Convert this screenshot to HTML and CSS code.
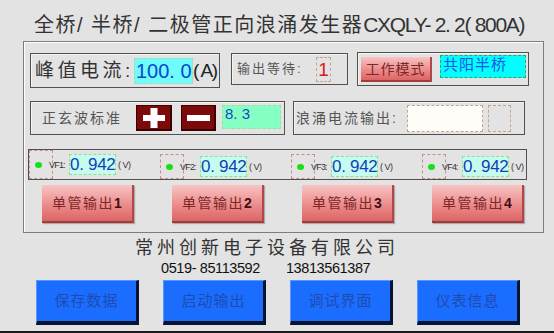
FILE: index.html
```html
<!DOCTYPE html>
<html lang="zh-CN">
<head>
    <meta charset="UTF-8">
    <meta name="viewport" content="width=device-width, initial-scale=1.0">
    <title>浪涌发生器</title>
    <link rel="stylesheet" href="styles.css">
</head>
<body>
    <div class="screen">
        <div class="title">全桥/ 半桥/ 二极管正向浪涌发生器<span class="model">CXQLY- 2. 2( 800A)</span></div>

        <div class="panel">
            <div class="row row-top">
                <div class="box box-peak">
                    <span class="peak-label">峰值电流:</span>
                    <span class="field peak-value">100. 0</span>
                    <span class="peak-unit">( A)</span>
                </div>
                <div class="box box-wait">
                    <span class="small-label">输出等待:</span>
                    <span class="field wait-value">1</span>
                </div>
                <div class="box box-mode">
                    <span class="btn-pink btn-mode">工作模式</span>
                    <span class="field mode-value">共阳半桥</span>
                </div>
            </div>

            <div class="row row-mid">
                <div class="box box-sine">
                    <span class="small-label sine-label">正玄波标准</span>
                    <span class="btn-red">
                        <svg width="24" height="20" viewBox="0 0 24 20"><rect x="1" y="7" width="22" height="6" fill="#fff"/><rect x="8.5" y="0" width="7" height="20" fill="#fff"/></svg>
                    </span>
                    <span class="btn-red btn-minus">
                        <svg width="24" height="20" viewBox="0 0 24 20"><rect x="1" y="7" width="23" height="6" fill="#fff"/></svg>
                    </span>
                    <span class="field sine-value">8. 3</span>
                </div>
                <div class="box box-surge">
                    <span class="small-label">浪涌电流输出:</span>
                    <span class="field surge-value"></span>
                    <span class="field surge-extra"></span>
                </div>
            </div>

            <div class="row">
                <div class="box box-vf">
                    <div class="vf">
                        <span class="vf-led"><i></i></span>
                        <span class="vf-label">VF1:</span>
                        <span class="field vf-value">0. 942</span>
                        <span class="vf-unit">( V)</span>
                    </div>
                    <div class="vf">
                        <span class="vf-led"><i></i></span>
                        <span class="vf-label">VF2:</span>
                        <span class="field vf-value">0. 942</span>
                        <span class="vf-unit">( V)</span>
                    </div>
                    <div class="vf">
                        <span class="vf-led"><i></i></span>
                        <span class="vf-label">VF3:</span>
                        <span class="field vf-value">0. 942</span>
                        <span class="vf-unit">( V)</span>
                    </div>
                    <div class="vf">
                        <span class="vf-led"><i></i></span>
                        <span class="vf-label">VF4:</span>
                        <span class="field vf-value">0. 942</span>
                        <span class="vf-unit">( V)</span>
                    </div>
                </div>
            </div>

            <div class="row row-out">
                <span class="btn-pink btn-out">单管输出<b>1</b></span>
                <span class="btn-pink btn-out">单管输出<b>2</b></span>
                <span class="btn-pink btn-out">单管输出<b>3</b></span>
                <span class="btn-pink btn-out">单管输出<b>4</b></span>
            </div>
        </div>

        <div class="company">常州创新电子设备有限公司</div>
        <div class="phone"><span>0519- 85113592</span><span>13813561387</span></div>

        <div class="menu">
            <span class="btn-blue">保存数据</span>
            <span class="btn-blue">启动输出</span>
            <span class="btn-blue">调试界面</span>
            <span class="btn-blue">仪表信息</span>
        </div>
        <div class="bottom-line"></div>
    </div>
</body>
</html>
```

FILE: styles.css
```css
body {
    margin: 0;
    background-color: #e3e3e3;
    font-family: "Liberation Sans", "Noto Sans CJK SC", sans-serif;
    color: #2b2b2b;
}
.screen {
    width: 554px;
    height: 333px;
    overflow: hidden;
    display: flex;
    flex-direction: column;
}
.title {
    height: 41px;
    box-sizing: border-box;
    padding: 12px 0 0 34px;
    font-size: 20px;
    line-height: 26px;
    letter-spacing: 1.5px;
    color: #333;
    white-space: nowrap;
}
.model {
    font-size: 21px;
    letter-spacing: -1.3px;
}
.panel {
    margin-left: 23px;
    width: 521px;
    height: 192px;
    box-sizing: border-box;
    border: 1px solid #7c7c7c;
    box-shadow: inset 1px 1px 0 #fff;
    padding-top: 11px;
    display: flex;
    flex-direction: column;
}
.row {
    display: flex;
    align-items: flex-start;
}
.row-mid {
    margin-top: 13px;
}
.row-mid + .row {
    margin-top: 14px;
}
.row-out {
    margin-top: 5px;
    padding-left: 18px;
    gap: 38px;
}
.box {
    box-sizing: border-box;
    border: 1px solid #505050;
    box-shadow: inset 1px 1px 0 #f4f4f4;
    display: flex;
    align-items: center;
}
.field {
    box-sizing: border-box;
    display: block;
    border: 1px dashed #c4a48c;
}
.box-peak {
    margin-left: 6px;
    width: 190px;
    height: 35px;
    padding-left: 4px;
}
.peak-label {
    width: 99px;
    font-size: 19px;
    line-height: 24px;
    letter-spacing: 3.5px;
    color: #333;
}
.peak-value {
    width: 59px;
    height: 26px;
    background-color: #6ffcff;
    border-color: #b8d890;
    color: #1045c8;
    font-size: 20px;
    line-height: 24px;
    padding-left: 1px;
    white-space: nowrap;
}
.peak-unit {
    font-size: 19px;
    line-height: 24px;
    letter-spacing: -1.5px;
    color: #222;
}
.box-wait {
    margin-left: 11px;
    width: 117px;
    height: 32px;
    padding-left: 5px;
}
.small-label {
    font-size: 14px;
    line-height: 20px;
    letter-spacing: 2px;
    color: #555;
}
.box-wait .small-label {
    font-size: 13px;
    width: 79px;
}
.wait-value {
    width: 15px;
    height: 25px;
    color: #e01818;
    font-size: 19px;
    line-height: 23px;
    text-align: center;
}
.box-mode {
    margin-left: 9px;
    margin-top: -1px;
    width: 172px;
    height: 34px;
    padding-left: 3px;
    align-items: flex-start;
}
.btn-pink {
    box-sizing: border-box;
    display: flex;
    align-items: center;
    justify-content: center;
    background: linear-gradient(#f8c4c4, #ec8c8c 55%, #dc6464);
    border-right: 2px solid #b04848;
    border-bottom: 2px solid #a03c3c;
    color: #7a2828;
}
.btn-mode {
    margin-top: 4px;
    width: 71px;
    height: 25px;
    font-size: 14px;
    letter-spacing: 1px;
    line-height: 20px;
}
.mode-value {
    margin: 2px 0 0 8px;
    width: 86px;
    height: 23px;
    background-color: #00ffff;
    border-color: #40a060;
    color: #2050e8;
    font-size: 15px;
    line-height: 18px;
    letter-spacing: 1px;
    padding-left: 2px;
}
.box-sine {
    margin-left: 6px;
    width: 255px;
    height: 34px;
    padding-left: 11px;
}
.sine-label {
    width: 94px;
}
.btn-red {
    box-sizing: border-box;
    width: 36px;
    height: 26px;
    display: flex;
    align-items: center;
    justify-content: center;
    background-color: #7c0a0a;
    border: 1px solid #3a0000;
    border-right-width: 2px;
    border-bottom-width: 2px;
}
.btn-minus {
    margin-left: 9px;
    width: 35px;
}
.sine-value {
    margin: -3px 0 0 6px;
    width: 59px;
    height: 24px;
    background-color: #86ffc4;
    border-color: #b0d8a0;
    color: #1848c0;
    font-size: 15px;
    line-height: 15px;
    padding-left: 2px;
}
.box-surge {
    margin-left: 8px;
    width: 232px;
    height: 34px;
    padding-left: 2px;
}
.box-surge .small-label {
    width: 111px;
}
.surge-value {
    width: 76px;
    height: 27px;
    background-color: #fffdf8;
}
.surge-extra {
    margin-left: 5px;
    width: 23px;
    height: 27px;
}
.box-vf {
    margin-left: 4px;
    width: 499px;
    height: 31px;
    box-shadow: none;
    align-items: stretch;
}
.vf {
    width: 131px;
    display: flex;
    align-items: center;
    flex-shrink: 0;
}
.vf + .vf {
    padding-top: 4px;
    box-sizing: border-box;
}
.vf-led {
    box-sizing: border-box;
    width: 24px;
    align-self: stretch;
    border: 1px dashed #c89080;
    display: flex;
    align-items: center;
    padding-left: 5px;
}
.vf-led i {
    display: block;
    width: 7px;
    height: 6px;
    border-radius: 50%;
    background-color: #14e014;
}
.vf-label {
    margin-left: -4px;
    width: 20px;
    font-size: 9px;
    letter-spacing: -0.8px;
    color: #333;
}
.vf-value {
    width: 47px;
    height: 21px;
    background-color: #c6fcf0;
    border-color: #90e090;
    color: #1040b8;
    font-size: 17px;
    line-height: 19px;
    letter-spacing: -0.3px;
    white-space: nowrap;
}
.vf-unit {
    margin-left: 2px;
    font-size: 9px;
    letter-spacing: -0.5px;
    color: #333;
}
.btn-out {
    width: 92px;
    height: 38px;
    font-size: 14px;
    letter-spacing: 1.5px;
    line-height: 20px;
    box-shadow: 1px 1px 1px rgba(0, 0, 0, 0.25);
}
.btn-out b {
    color: #401010;
    letter-spacing: 0;
}
.company {
    margin-top: 3px;
    padding-left: 135px;
    font-size: 18px;
    line-height: 24px;
    letter-spacing: 4px;
    color: #333;
}
.phone {
    padding-left: 161px;
    font-size: 14.5px;
    line-height: 16px;
    letter-spacing: -0.4px;
    color: #111;
    display: flex;
    gap: 26px;
}
.menu {
    margin-top: 4px;
    padding-left: 36px;
    display: flex;
    gap: 24px;
}
.btn-blue {
    box-sizing: border-box;
    width: 103px;
    height: 45px;
    display: flex;
    align-items: center;
    justify-content: center;
    background-color: #1a6dff;
    border-top: 1px solid #5896ff;
    border-left: 1px solid #5896ff;
    border-right: 3px solid #061430;
    border-bottom: 4px solid #061430;
    color: #1f4cb0;
    font-size: 15px;
    letter-spacing: 1px;
    line-height: 20px;
}
.bottom-line {
    margin-top: 6px;
    height: 2px;
    background-color: #1a1a1a;
}
```
